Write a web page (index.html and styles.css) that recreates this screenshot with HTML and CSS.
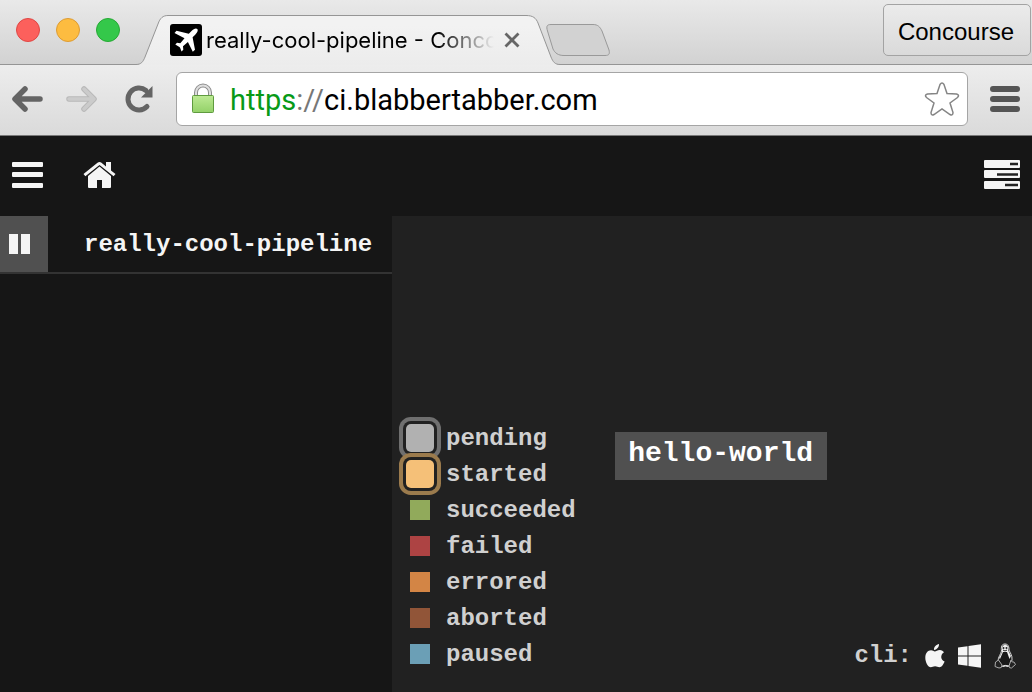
FILE: index.html
```html
<!DOCTYPE html>
<html lang="en">
<head>
<meta charset="utf-8">
<title>really-cool-pipeline - Concourse</title>
<meta name="viewport" content="width=device-width, initial-scale=1">
<link rel="stylesheet" href="styles.css">
</head>
<body>
<header class="chrome">
  <div class="tabstrip">
    <div class="lights">
      <button class="light close" aria-label="Close window"></button>
      <button class="light minimize" aria-label="Minimize window"></button>
      <button class="light maximize" aria-label="Maximize window"></button>
    </div>
    <div class="tab">
      <svg class="tab-shape" viewBox="0 0 424 65" width="424" height="65" aria-hidden="true">
        <defs><linearGradient id="tabfill" x1="0" y1="0" x2="0" y2="1"><stop offset="0.2" stop-color="#f2f2f2"/><stop offset="1" stop-color="#ececec"/></linearGradient></defs>
        <path d="M0 65V64.500C5 64.500 7 62 9 57L22 24C24 18 27 15.500 32 15.500H390C397 15.500 400 18 402 23L415 57C417 62 419 64.500 424 64.500V65Z" fill="url(#tabfill)"/>
        <path d="M0 64.500C5 64.500 7 62 9 57L22 24C24 18 27 15.500 32 15.500H390C397 15.500 400 18 402 23L415 57C417 62 419 64.500 424 64.500" fill="none" stroke="#959595"/>
      </svg>
      <svg class="favicon" viewBox="0 0 32 32" width="32" height="32" aria-hidden="true">
        <rect width="32" height="32" rx="3"/>
        <path fill="#fff" d="M27.300 5C26 3.700 23.500 5 21.500 7L18.800 9.700L6.500 6.800L4.500 8.900L14.500 14.200L10.300 19.200L7 18.800L5.300 20.500L9 22.700L10 23.500L11.500 27.500L13.300 25.700L13 22.300L17.900 18L22.800 27.800L25 25.700L22.600 13.300L25.200 10.700C27.300 8.500 28.500 6.200 27.300 5Z"/>
      </svg>
      <span class="tab-title">really-cool-pipeline - Concourse</span>
      <button class="tab-close" aria-label="Close tab"><svg viewBox="0 0 16 16" width="16" height="16" aria-hidden="true"><path d="M1.500 1.500L14.500 14.500M14.500 1.500L1.500 14.500" stroke="#666" stroke-width="2.800"/></svg></button>
    </div>
    <button class="new-tab" aria-label="New tab"><svg viewBox="0 0 66 34" width="66" height="34" aria-hidden="true"><path d="M5 1.500H47C52 1.500 54 4 56 8L63 27C64 31 63 32.500 59 32.500H18C12 32.500 9 30 7 26L1.500 8C0 3 1 1.500 5 1.500Z" fill="#d2d2d2" stroke="#999"/></svg></button>
    <button class="profile">Concourse</button>
  </div>
  <div class="toolbar">
    <button class="nav" aria-label="Back"><svg viewBox="0 0 34 30" width="34" height="30" aria-hidden="true"><path d="M15 5L5 15L15 25M6 15H30" fill="none" stroke="#646464" stroke-width="5.500" stroke-linecap="round" stroke-linejoin="round"/></svg></button>
    <button class="nav" aria-label="Forward"><svg viewBox="0 0 34 30" width="34" height="30" aria-hidden="true"><path d="M18 5L28 15L18 25M27 15H3" fill="none" stroke="#b8b8b8" stroke-width="5.500" stroke-linecap="round" stroke-linejoin="round"/><path d="M18 5L28 15L18 25M27 15H3" fill="none" stroke="#cbcbcb" stroke-width="3.500" stroke-linecap="round" stroke-linejoin="round"/></svg></button>
    <button class="nav reload" aria-label="Reload"><svg viewBox="0 0 30 30" width="30" height="30" aria-hidden="true"><path d="M22 6.500A11 11 0 1 0 23 22.500" fill="none" stroke="#646464" stroke-width="5" stroke-linecap="round"/><path d="M28.500 2V13.500H17Z" fill="#646464"/></svg></button>
    <div class="address">
      <svg viewBox="0 0 24 32" width="24" height="32" aria-hidden="true">
        <defs><linearGradient id="lockfill" x1="0" y1="0" x2="0" y2="1"><stop stop-color="#bdea94"/><stop offset="1" stop-color="#93d168"/></linearGradient></defs>
        <path d="M5 13V9.500A7 7 0 0 1 19 9.500V13" fill="none" stroke="#8c8c8c" stroke-width="4"/>
        <path d="M5 13V9.500A7 7 0 0 1 19 9.500V13" fill="none" stroke="#dedede" stroke-width="2"/>
        <rect x="1.500" y="12.500" width="21" height="17" rx="1" fill="url(#lockfill)" stroke="#5f9b3f"/>
      </svg>
      <div class="url"><span class="scheme">https</span><span class="slashes">://</span>ci.blabbertabber.com</div>
      <button class="star" aria-label="Bookmark this page"><svg viewBox="0 0 36 36" width="36" height="36" aria-hidden="true"><path d="M16 3.500Q18 .5 20 3.500L23 12.500L32.500 13Q36 14 33.500 16.500L26 22L29 31.500Q29 35 26 33.500L18 28L10 33.500Q7 35 7 31.500L10 22L2.500 16.500Q0 14 3.500 13L13 12.500Z" fill="#fff" stroke="#858585" stroke-width="1.500"/></svg></button>
    </div>
    <button class="menu" aria-label="Menu"><svg viewBox="0 0 30 26" width="30" height="26" aria-hidden="true"><path d="M3 3H27M3 13H27M3 23H27" stroke="#555" stroke-width="6" stroke-linecap="round"/></svg></button>
  </div>
</header>
<div class="app">
  <nav class="topbar">
    <button aria-label="Toggle pipelines"><svg viewBox="0 0 32 28" width="32" height="28" aria-hidden="true"><g fill="#f5f5f5"><rect y="1" width="31" height="5" rx="1"/><rect y="11" width="31" height="5" rx="1"/><rect y="22" width="31" height="5" rx="1"/></g></svg></button>
    <a href="#" aria-label="Home"><svg viewBox="0 0 33 28" width="33" height="28" aria-hidden="true"><g fill="#f5f5f5"><path d="M5 15L16.500 5.500L28 15V26Q28 27 27 27H19V19H14V27H6Q5 27 5 26Z"/><path d="M.5 13L14.500 1.700Q16.500 .3 18.500 1.700L23 5.400V1H28V9.500L32.500 13L30.600 15.300L16.500 3.900L2.400 15.300Z"/></g></svg></a>
    <a class="builds" href="#" aria-label="Builds"><svg viewBox="0 0 36 30" width="36" height="30" aria-hidden="true"><g fill="#f5f5f5"><rect y="0" width="36" height="8" rx="1"/><rect y="10" width="36" height="8" rx="1"/><rect y="21" width="36" height="8" rx="1"/></g><path d="M26 4H34M13 14.500H34M21 25H34" stroke="#222" stroke-width="2.500"/></svg></a>
  </nav>
  <div class="workspace">
    <aside class="sidebar">
      <div class="pipeline">
        <button class="pause" aria-label="Pause pipeline"><svg viewBox="0 0 22 22" width="22" height="22" aria-hidden="true"><path d="M0 1H9V21H0ZM12 1H21V21H12Z" fill="#f5f5f5"/></svg></button>
        <a href="#">really-cool-pipeline</a>
      </div>
    </aside>
    <main class="canvas">
      <ul class="legend">
        <li><i class="swatch pulse pending"></i>pending</li>
        <li><i class="swatch pulse started"></i>started</li>
        <li><i class="swatch succeeded"></i>succeeded</li>
        <li><i class="swatch failed"></i>failed</li>
        <li><i class="swatch errored"></i>errored</li>
        <li><i class="swatch aborted"></i>aborted</li>
        <li><i class="swatch paused"></i>paused</li>
      </ul>
      <a class="job" href="#">hello-world</a>
      <div class="cli">
        <span>cli:</span>
        <a href="#" aria-label="Mac CLI"><svg viewBox="0 0 20 24" width="20" height="24" aria-hidden="true"><path fill="#f5f5f5" d="M14 0C14.300 3 11.500 6 9 5.900C8.700 3 11.500.4 14 0ZM9.800 7.500C11 7.500 12.500 6 14.800 6C16.700 6 18.200 7.100 19 8.300C15 10.800 15.500 16.100 19.600 17.600C18.500 20.500 16.700 23.300 14.500 23.300C12.700 23.300 12 22.300 10.100 22.300C8.200 22.300 7.300 23.300 5.800 23.300C3 23.300.3 18 .3 13.700C.3 9 3 6.300 6 6.300C7.700 6.300 8.800 7.500 9.800 7.500Z"/></svg></a>
        <a href="#" aria-label="Windows CLI"><svg viewBox="0 0 23 24" width="23" height="24" aria-hidden="true"><path fill="#f5f5f5" d="M0 3.500L9.500 2.200V11.500H0ZM10.500 2L23 .2V11.500H10.500ZM0 12.500H9.500V21.800L0 20.500ZM10.500 12.500H23V23.800L10.500 22Z"/></svg></a>
        <a href="#" aria-label="Linux CLI"><svg viewBox="0 0 22 26" width="22" height="26" aria-hidden="true"><path d="M7.500 8C7 4 7.500 1 11 1C14.500 1 15 4 15 7C16 10 18.500 12 18 17L16 23Q11 21.500 6.500 23.500L4 18C4 14 7 11 7.500 8Z" fill="#191919" stroke="#d7d7d7"/><path d="M8 4Q11 -1 14.500 4L14 7L17 13L15.500 16L13 9L9 9L6 16L5 15L8 9Z" fill="#eee"/><circle cx="9.500" cy="5" r="1" fill="#222"/><circle cx="12.500" cy="5" r="1" fill="#222"/><path d="M9 7L11 8L13 7" fill="none" stroke="#222"/><path d="M4.500 17L8 22Q8 25.500 5 25L1 23.500L1.500 19ZM17 17Q18 20 20 19L21.500 21.500L17.500 25Q15 25.500 15 23Z" fill="#222" stroke="#aaa"/><path d="M8.500 23.500Q11.500 22.500 14.500 23.500" stroke="#eee" fill="none"/></svg></a>
      </div>
    </main>
  </div>
</div>
</body>
</html>
```

FILE: styles.css
```css
* { box-sizing: border-box; }

body {
  margin: 0;
  min-height: 100vh;
  display: flex;
  flex-direction: column;
  background: #161616;
  font-family: "Liberation Sans", Arial, sans-serif;
}

button {
  border: 0;
  padding: 0;
  background: none;
  font: inherit;
}

svg { display: block; flex: none; }
a { color: inherit; text-decoration: none; }

.tabstrip {
  display: flex;
  height: 65px;
  background: linear-gradient(#e9e9e9, #d2d2d2);
  border-bottom: 1px solid #959595;
}

.lights {
  display: flex;
  gap: 16px;
  padding: 18px 0 0 16px;
  width: 136px;
  flex: none;
}

.light {
  width: 24px;
  height: 24px;
  border-radius: 50%;
  border: 1px solid;
}

.close { background: #fc605c; border-color: #df4744; }
.minimize { background: #fdbc40; border-color: #dd9c34; }
.maximize { background: #34c84a; border-color: #26a934; }

.tab {
  position: relative;
  display: flex;
  align-items: center;
  width: 424px;
  height: 65px;
  padding: 14px 40px 0 34px;
  flex: none;
}

.tab-shape { position: absolute; inset: 0; }
.favicon, .tab-title, .tab-close { position: relative; }

.tab-title {
  flex: 1;
  margin: 0 10px 0 4px;
  overflow: hidden;
  white-space: nowrap;
  font: 22px/32px Inter, sans-serif;
  -webkit-mask-image: linear-gradient(90deg, #000 80%, transparent);
  mask-image: linear-gradient(90deg, #000 80%, transparent);
}

.new-tab { align-self: flex-start; padding-top: 23px; margin-left: -14px; }

.profile {
  height: 52px;
  margin: 4px 1px 0 auto;
  padding: 4px 16px 0 14px;
  border: 1px solid #a3a3a3;
  border-radius: 5px;
  background: linear-gradient(#ebebeb, #dadada);
  font-size: 24px;
}

.toolbar {
  display: flex;
  align-items: center;
  height: 71px;
  padding: 0 12px 3px 10px;
  background: linear-gradient(#ededed, #dadada);
  border-bottom: 1px solid #797979;
}

.nav { margin-right: 22px; }
.reload { margin: 0 22px 0 2px; }

.address {
  display: flex;
  align-items: center;
  flex: 1;
  height: 54px;
  padding: 0 7px 0 14px;
  border: 1px solid #a5a5a5;
  border-radius: 6px;
  background: #fff;
}

.url {
  flex: 1;
  margin-left: 15px;
  padding-top: 3px;
  font: 29px/36px Roboto, sans-serif;
}

.scheme { color: #079a17; }
.slashes { color: #777; }
.menu { margin-left: 22px; }

.app {
  flex: 1;
  display: flex;
  flex-direction: column;
  font-family: "Courier", "Liberation Mono", monospace;
  font-size: 24px;
  font-weight: bold;
}

.topbar {
  display: flex;
  align-items: center;
  gap: 39px;
  height: 80px;
  padding: 0 12px 2px;
}

.builds { margin-left: auto; }
.workspace { flex: 1; display: flex; }
.sidebar { width: 392px; color: #f5f5f5; }

.pipeline {
  display: flex;
  align-items: center;
  gap: 36px;
  height: 58px;
  border-bottom: 2px solid #333;
}

.pause {
  align-self: stretch;
  width: 48px;
  padding-left: 9px;
  background: #505050;
}

.canvas {
  flex: 1;
  display: grid;
  grid-template-columns: auto 1fr auto;
  align-items: end;
  background: #212121;
  color: #d0d0d0;
}

.legend {
  list-style: none;
  margin: 0;
  padding: 0 0 20px 18px;
}

.legend li {
  display: flex;
  align-items: center;
  gap: 16px;
  height: 36px;
}

.swatch { width: 20px; height: 20px; }
.pulse { width: 28px; height: 28px; margin: 0 -4px; border-radius: 5px; }
.pending { background: #b1b1b1; box-shadow: 0 0 0 3px #212121, 0 0 0 7px #6f6f6f; }
.started { background: #f5c078; box-shadow: 0 0 0 3px #212121, 0 0 0 7px #9b7b4d; }
.succeeded { background: #91aa5b; }
.failed { background: #ad4343; }
.errored { background: #d38545; }
.aborted { background: #915538; }
.paused { background: #6b9fb6; }

.job {
  justify-self: start;
  width: 212px;
  height: 48px;
  margin: 0 0 212px 39px;
  background: #505050;
  color: #fff;
  text-align: center;
  font-size: 28px;
  line-height: 44px;
}

.cli {
  display: flex;
  align-items: center;
  gap: 13px;
  padding: 0 16px 23px 0;
}
```
